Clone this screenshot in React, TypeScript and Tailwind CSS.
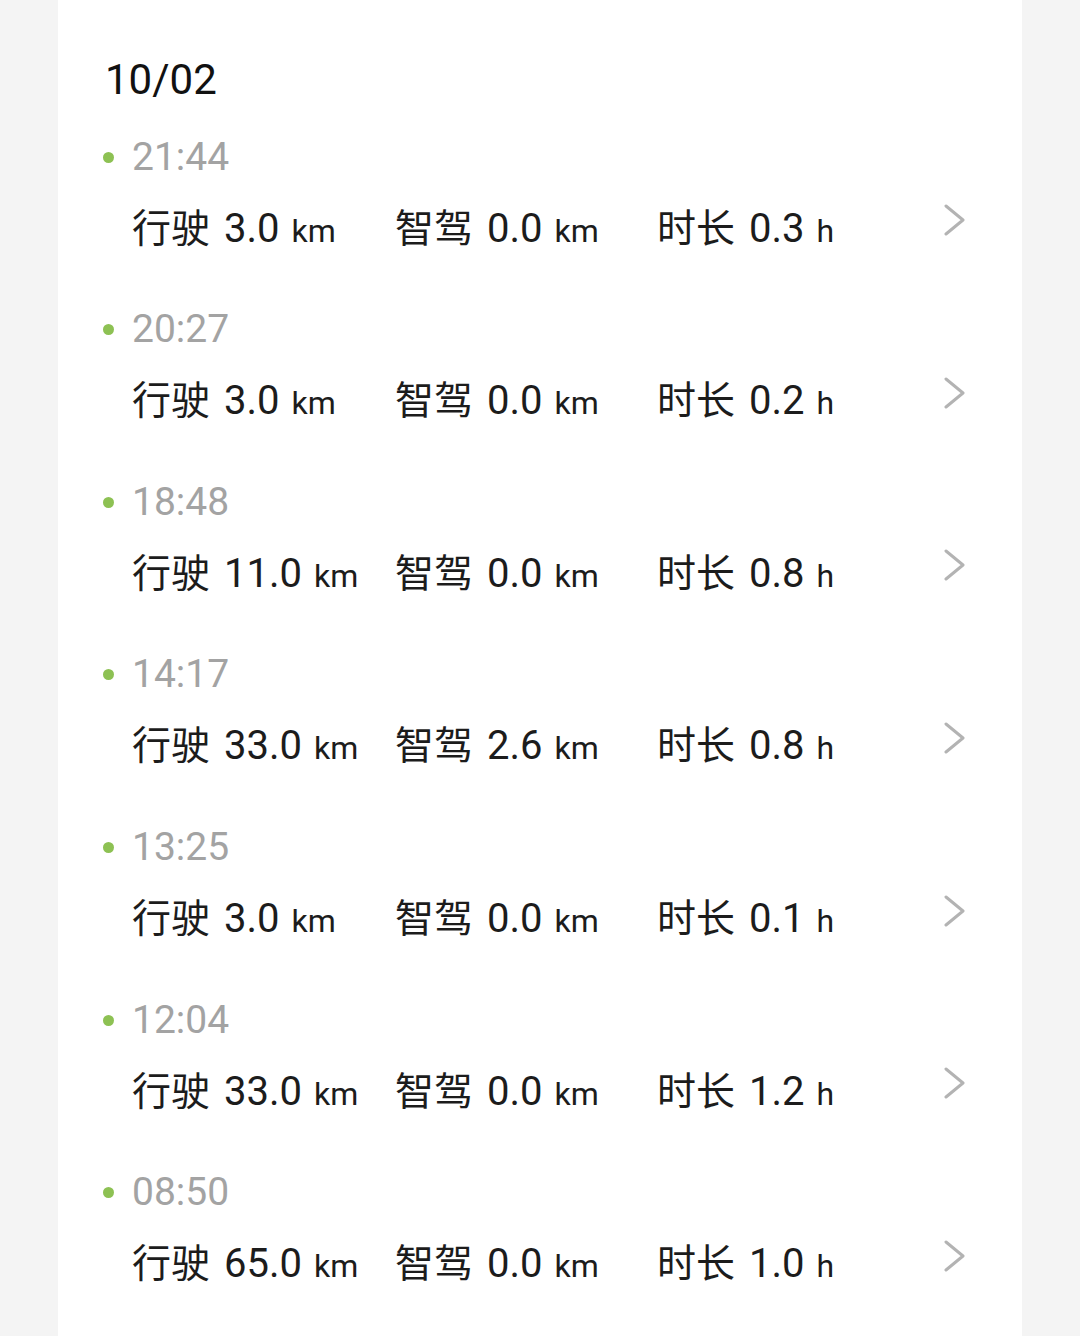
import React from 'react'

interface Trip {
  time: string
  drive: string
  smart: string
  hours: string
}

const trips: Trip[] = [
  { time: '21:44', drive: '3.0', smart: '0.0', hours: '0.3' },
  { time: '20:27', drive: '3.0', smart: '0.0', hours: '0.2' },
  { time: '18:48', drive: '11.0', smart: '0.0', hours: '0.8' },
  { time: '14:17', drive: '33.0', smart: '2.6', hours: '0.8' },
  { time: '13:25', drive: '3.0', smart: '0.0', hours: '0.1' },
  { time: '12:04', drive: '33.0', smart: '0.0', hours: '1.2' },
  { time: '08:50', drive: '65.0', smart: '0.0', hours: '1.0' },
]

const cjk = { fontFamily: '"Noto Sans CJK SC", sans-serif' }
const latin = { fontFamily: 'Roboto, "Noto Sans CJK SC", sans-serif' }

function Stat({ label, value, unit }: { label: string; value: string; unit: string }) {
  return (
    <div className="flex items-baseline leading-none text-[#1c1c1c]">
      <span className="text-[39px]" style={cjk}>{label}</span>
      <span className="ml-[14px] text-[40px]" style={latin}>{value}</span>
      <span className="ml-[12px] text-[32px]" style={latin}>{unit}</span>
    </div>
  )
}

function Chevron() {
  return (
    <svg width="22" height="32" viewBox="0 0 22 32" fill="none" className="mb-[14px]">
      <polyline points="2,2 19,16 2,30" stroke="#b3b3b3" strokeWidth="3" strokeLinecap="round" strokeLinejoin="round" />
    </svg>
  )
}

export default function App() {
  return (
    <div className="min-h-screen bg-[#f4f4f4] flex justify-center">
      <div className="w-[964px] bg-white pl-[47px] pr-[56px] pt-[55px] pb-[20px]">
        <div className="h-[50px] flex items-center text-[42px] leading-none text-[#111]" style={latin}>
          10/02
        </div>
        <div className="mt-[30px]">
          {trips.map((t) => (
            <div key={t.time} className="h-[172.67px] flex flex-col">
              <div className="h-[44px] flex items-center">
                <span className="-ml-[2px] w-[11px] h-[11px] rounded-full bg-[#8dc153]" />
                <span className="ml-[18px] text-[39px] leading-none text-[#a3a3a3]" style={latin}>{t.time}</span>
              </div>
              <div className="mt-[23px] h-[50px] flex items-center pl-[27px]">
                <div className="w-[263px]">
                  <Stat label="行驶" value={t.drive} unit="km" />
                </div>
                <div className="w-[262px]">
                  <Stat label="智驾" value={t.smart} unit="km" />
                </div>
                <div className="flex-1">
                  <Stat label="时长" value={t.hours} unit="h" />
                </div>
                <Chevron />
              </div>
            </div>
          ))}
        </div>
      </div>
    </div>
  )
}
